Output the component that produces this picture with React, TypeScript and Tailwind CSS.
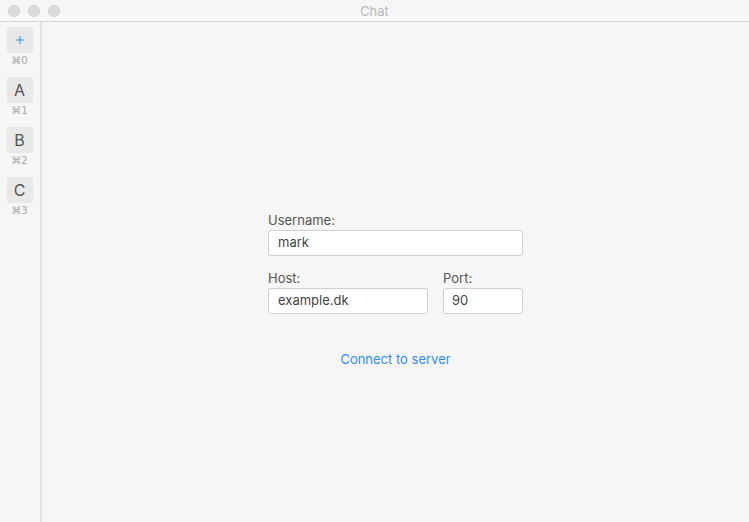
import { Plus } from "lucide-react"

const rooms = [
  { label: "A", key: "⌘1" },
  { label: "B", key: "⌘2" },
  { label: "C", key: "⌘3" },
]

function TrafficLights() {
  return (
    <div className="flex items-center gap-[8px] pl-[8px] pt-[1px]">
      <span className="w-[12px] h-[12px] rounded-full bg-[#dcdcdc] border border-[#d0d0d0]" />
      <span className="w-[12px] h-[12px] rounded-full bg-[#dcdcdc] border border-[#d0d0d0]" />
      <span className="w-[12px] h-[12px] rounded-full bg-[#dcdcdc] border border-[#d0d0d0]" />
    </div>
  )
}

function SideItem({ label, shortcut, children }: { label?: string; shortcut: string; children?: React.ReactNode }) {
  return (
    <div className="flex flex-col items-center h-[50px]">
      <div className="w-[26px] h-[26px] rounded-[3px] bg-[#e8e8e8] flex items-center justify-center text-[16px] text-[#555]">
        {children ?? label}
      </div>
      <span className="mt-[2px] text-[10px] leading-[12px] text-[#a8a8a8] font-['DejaVu_Sans',sans-serif]">{shortcut}</span>
    </div>
  )
}

export default function App() {
  return (
    <div className="w-[749px] h-[522px] bg-[#f6f6f6] flex flex-col font-['Inter','Liberation_Sans',sans-serif] overflow-hidden">
      <div className="relative h-[22px] shrink-0 flex items-center border-b border-[#d6d6d6] bg-[#f6f6f6]">
        <TrafficLights />
        <div className="absolute inset-0 pt-[2px] flex items-center justify-center text-[13px] text-[#b9b9b9]">Chat</div>
      </div>

      <div className="flex flex-1">
        <aside className="w-[42px] shrink-0 border-r-2 border-[#e3e3e3] flex flex-col items-center pt-[5px] pr-[1px]">
          <SideItem shortcut="⌘0">
            <Plus className="w-[12px] h-[12px] text-[#2f8ff0]" strokeWidth={2.2} />
          </SideItem>
          {rooms.map((r) => (
            <SideItem key={r.label} label={r.label} shortcut={r.key} />
          ))}
        </aside>

        <main className="flex-1 flex justify-center pt-[190px]">
          <div className="w-[255px] flex flex-col text-[13px] text-[#555]">
            <label className="leading-[16px] mb-[2px]">Username:</label>
            <div className="h-[26px] rounded-[3px] border border-[#d0d0d0] bg-white flex items-center px-[9px] text-[#444]">mark</div>

            <div className="flex gap-[15px] mt-[14px]">
              <div className="flex-1 flex flex-col">
                <label className="leading-[16px] mb-[2px]">Host:</label>
                <div className="h-[26px] rounded-[3px] border border-[#d0d0d0] bg-white flex items-center px-[9px] text-[#444]">example.dk</div>
              </div>
              <div className="w-[80px] flex flex-col">
                <label className="leading-[16px] mb-[2px]">Port:</label>
                <div className="h-[26px] rounded-[3px] border border-[#d0d0d0] bg-white flex items-center px-[8px] text-[#444]">90</div>
              </div>
            </div>

            <div className="mt-[37px] text-center text-[#2f8ff0] leading-[16px]">Connect to server</div>
          </div>
        </main>
      </div>
    </div>
  )
}
